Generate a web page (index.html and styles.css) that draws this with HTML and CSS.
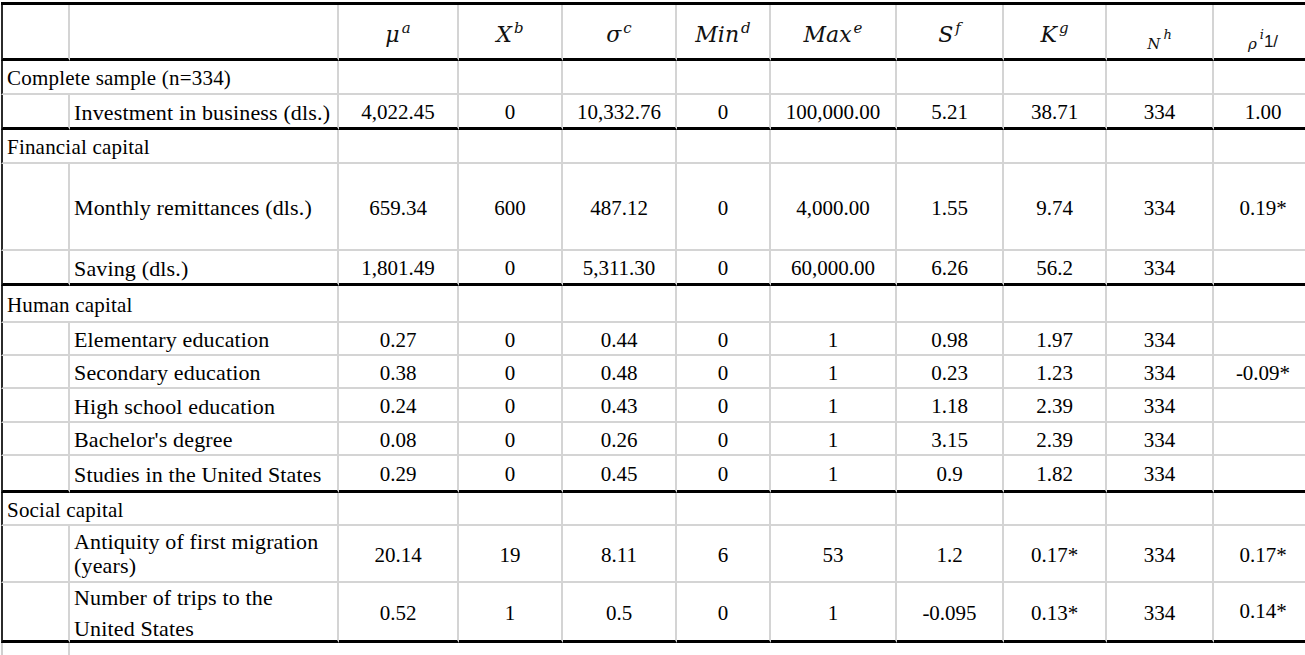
FILE: index.html
```html
<!DOCTYPE html>
<html lang="en">
<head>
<meta charset="utf-8">
<title>Descriptive statistics</title>
<link rel="stylesheet" href="styles.css">
</head>
<body>
<div class="sheet">
  <div class="row head">
    <div class="c"></div><div class="c"></div>
    <div class="c h"><span class="m">μ<sup>a</sup></span></div>
    <div class="c h"><span class="m">X<sup>b</sup></span></div>
    <div class="c h"><span class="m">σ<sup>c</sup></span></div>
    <div class="c h"><span class="m">Min<sup>d</sup></span></div>
    <div class="c h"><span class="m">Max<sup>e</sup></span></div>
    <div class="c h"><span class="m">S<sup>f</sup></span></div>
    <div class="c h"><span class="m">K<sup>g</sup></span></div>
    <div class="c h"><span class="m small">N<sup>h</sup></span></div>
    <div class="c h"><span class="m small">ρ<sup>i</sup><span class="sans">1/</span></span></div>
  </div>

  <div class="row"><div class="c lab span">Complete sample (n=334)</div><div class="c"></div><div class="c"></div><div class="c"></div><div class="c"></div><div class="c"></div><div class="c"></div><div class="c"></div><div class="c"></div><div class="c"></div></div>
  <div class="row end"><div class="c"></div><div class="c lab">Investment in business (dls.)</div><div class="c n">4,022.45</div><div class="c n">0</div><div class="c n">10,332.76</div><div class="c n">0</div><div class="c n">100,000.00</div><div class="c n">5.21</div><div class="c n">38.71</div><div class="c n">334</div><div class="c n">1.00</div></div>

  <div class="row"><div class="c lab span">Financial capital</div><div class="c"></div><div class="c"></div><div class="c"></div><div class="c"></div><div class="c"></div><div class="c"></div><div class="c"></div><div class="c"></div><div class="c"></div></div>
  <div class="row"><div class="c"></div><div class="c lab">Monthly remittances (dls.)</div><div class="c n">659.34</div><div class="c n">600</div><div class="c n">487.12</div><div class="c n">0</div><div class="c n">4,000.00</div><div class="c n">1.55</div><div class="c n">9.74</div><div class="c n">334</div><div class="c n">0.19*</div></div>
  <div class="row end"><div class="c"></div><div class="c lab">Saving (dls.)</div><div class="c n">1,801.49</div><div class="c n">0</div><div class="c n">5,311.30</div><div class="c n">0</div><div class="c n">60,000.00</div><div class="c n">6.26</div><div class="c n">56.2</div><div class="c n">334</div><div class="c n"></div></div>

  <div class="row"><div class="c lab span">Human capital</div><div class="c"></div><div class="c"></div><div class="c"></div><div class="c"></div><div class="c"></div><div class="c"></div><div class="c"></div><div class="c"></div><div class="c"></div></div>
  <div class="row"><div class="c"></div><div class="c lab">Elementary education</div><div class="c n">0.27</div><div class="c n">0</div><div class="c n">0.44</div><div class="c n">0</div><div class="c n">1</div><div class="c n">0.98</div><div class="c n">1.97</div><div class="c n">334</div><div class="c n"></div></div>
  <div class="row"><div class="c"></div><div class="c lab">Secondary education</div><div class="c n">0.38</div><div class="c n">0</div><div class="c n">0.48</div><div class="c n">0</div><div class="c n">1</div><div class="c n">0.23</div><div class="c n">1.23</div><div class="c n">334</div><div class="c n">-0.09*</div></div>
  <div class="row"><div class="c"></div><div class="c lab">High school education</div><div class="c n">0.24</div><div class="c n">0</div><div class="c n">0.43</div><div class="c n">0</div><div class="c n">1</div><div class="c n">1.18</div><div class="c n">2.39</div><div class="c n">334</div><div class="c n"></div></div>
  <div class="row"><div class="c"></div><div class="c lab">Bachelor's degree</div><div class="c n">0.08</div><div class="c n">0</div><div class="c n">0.26</div><div class="c n">0</div><div class="c n">1</div><div class="c n">3.15</div><div class="c n">2.39</div><div class="c n">334</div><div class="c n"></div></div>
  <div class="row end"><div class="c"></div><div class="c lab">Studies in the United States</div><div class="c n">0.29</div><div class="c n">0</div><div class="c n">0.45</div><div class="c n">0</div><div class="c n">1</div><div class="c n">0.9</div><div class="c n">1.82</div><div class="c n">334</div><div class="c n"></div></div>

  <div class="row"><div class="c lab span">Social capital</div><div class="c"></div><div class="c"></div><div class="c"></div><div class="c"></div><div class="c"></div><div class="c"></div><div class="c"></div><div class="c"></div><div class="c"></div></div>
  <div class="row"><div class="c"></div><div class="c lab two tight"><span>Antiquity of first migration</span><span>(years)</span></div><div class="c n">20.14</div><div class="c n">19</div><div class="c n">8.11</div><div class="c n">6</div><div class="c n">53</div><div class="c n">1.2</div><div class="c n">0.17*</div><div class="c n">334</div><div class="c n">0.17*</div></div>
  <div class="row end"><div class="c"></div><div class="c lab two wide"><span>Number of trips to the</span><span>United States</span></div><div class="c n">0.52</div><div class="c n">1</div><div class="c n">0.5</div><div class="c n">0</div><div class="c n">1</div><div class="c n">-0.095</div><div class="c n">0.13*</div><div class="c n">334</div><div class="c n up">0.14*</div></div>

  <div class="row tail"><div class="c"></div><div class="c rest"></div></div>
</div>
</body>
</html>
```
FILE: styles.css
```css
html, body {
  margin: 0;
  padding: 0;
  background: #fff;
  overflow: hidden;
}

body {
  font-family: "Liberation Serif", "Times New Roman", serif;
  font-size: 21px;
  color: #000;
}

.sheet {
  display: grid;
  grid-template-columns: 69px 269px 120px 104px 114px 94px 126px 107px 103px 107px 100px;
  grid-template-rows: 56px 34px 35px 34px 87px 35px 37px 33px 33px 34px 33px 37px 33px 57px 60px 20px;
  width: 1313px;
  margin: 2px 0 0 1px;
  border-top: 3px solid #000;
}

.row {
  display: contents;
}

.c {
  box-sizing: border-box;
  border-right: 2px solid #d4d4d4;
  border-bottom: 2px solid #d4d4d4;
  display: flex;
  align-items: center;
  min-width: 0;
  white-space: nowrap;
}

.row > .c:first-child {
  border-left: 2px solid #2b2b2b;
}

.row.head > .c,
.row.end > .c {
  border-bottom: 3px solid #000;
}

.row.tail > .c {
  border-bottom: none;
}

.row.tail > .c:first-child {
  border-left-color: #cfcfcf;
}

.row.tail > .rest {
  grid-column: span 10;
  border-right: none;
}

.span {
  grid-column: span 2;
}

.lab {
  padding: 3px 0 0 4px;
  font-size: 22px;
  letter-spacing: 0.15px;
}

.lab.span {
  font-size: 21px;
  letter-spacing: 0.2px;
}

.n {
  justify-content: center;
  padding-top: 3px;
}

.n.up {
  padding-top: 0;
}

.two {
  flex-direction: column;
  align-items: flex-start;
}

.two.tight {
  justify-content: center;
  padding-top: 0;
  line-height: 24px;
}

.two.wide {
  justify-content: flex-start;
  padding-top: 3px;
  line-height: 24px;
  gap: 7px;
}

.h {
  justify-content: center;
  padding-top: 6px;
}

.m {
  font-family: "DejaVu Serif", "Liberation Serif", serif;
  font-style: italic;
  font-size: 22px;
  color: #111;
  line-height: 1;
}

.m sup {
  font-size: 15px;
  vertical-align: 9px;
  line-height: 0;
  margin-left: 2px;
}

.m.small {
  font-size: 15px;
  padding-top: 18px;
}

.m.small sup {
  font-size: 13px;
  vertical-align: 10px;
  margin-left: 3px;
}

.sans {
  font-family: "Liberation Sans", "DejaVu Sans", sans-serif;
  font-style: normal;
  font-size: 17px;
  vertical-align: 0;
  position: relative;
  top: -2px;
}
```
